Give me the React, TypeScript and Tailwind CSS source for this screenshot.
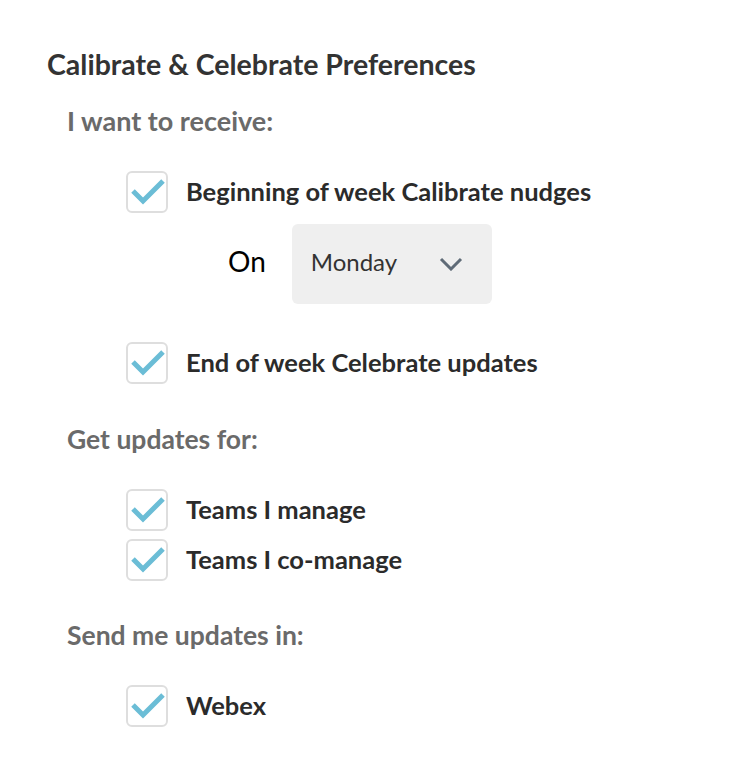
function Check({ label, className = "" }: { label: string; className?: string }) {
	return (
		<label className={`flex items-center ${className}`}>
			<span className="flex h-[42px] w-[42px] shrink-0 items-center justify-center rounded-[6px] border-2 border-[#dedede] bg-white">
				<svg width="42" height="42" viewBox="0 0 42 42" className="-m-[2px]">
					<path d="M7 20 L17 30 L37 10" fill="none" stroke="#6bbdd6" strokeWidth="5" />
				</svg>
			</span>
			<span className="ml-[18px] pb-[3px] text-[25.5px] font-bold leading-[30px] text-[#2b2b2b]">{label}</span>
		</label>
	);
}

export default function App() {
	return (
		<div
			className="min-h-[780px] w-[738px] bg-white pl-[47px] pt-[48px]"
			style={{ fontFamily: "Lato, 'Open Sans', sans-serif" }}
		>
			<h1 className="text-[28.5px] font-bold leading-[32px] text-[#333333]">
				Calibrate &amp; Celebrate Preferences
			</h1>

			<div className="pl-[20px]">
				<p className="mt-[27px] text-[27px] font-bold leading-[28px] text-[#6a6a6a]">I want to receive:</p>

				<div className="pl-[59px]">
					<Check label="Beginning of week Calibrate nudges" className="mt-[36px]" />

					<div className="mt-[11px] flex items-center pl-[102px]">
						<span className="pb-[7px] text-[28px] leading-[32px] text-black">On</span>
						<div className="ml-[26px] flex h-[80px] w-[200px] items-center justify-between rounded-[6px] bg-[#efefef] pl-[19px] pr-[29px]">
							<span className="pb-[4px] text-[24px] leading-[28px] text-[#333333]">Monday</span>
							<svg width="24" height="14" viewBox="0 0 24 14">
								<path d="M2 2 L12 12 L22 2" fill="none" stroke="#5f6b77" strokeWidth="3" />
							</svg>
						</div>
					</div>

					<Check label="End of week Celebrate updates" className="mt-[38px]" />
				</div>

				<p className="mt-[41px] pb-[1px] text-[26.5px] font-bold leading-[28px] text-[#6a6a6a]">Get updates for:</p>

				<div className="pl-[59px]">
					<Check label="Teams I manage" className="mt-[35px]" />
					<Check label="Teams I co-manage" className="mt-[8px]" />
				</div>

				<p className="mt-[40px] pb-[1px] text-[26.5px] font-bold leading-[28px] text-[#6a6a6a]">Send me updates in:</p>

				<div className="pl-[59px]">
					<Check label="Webex" className="mt-[35px]" />
				</div>
			</div>
		</div>
	);
}
